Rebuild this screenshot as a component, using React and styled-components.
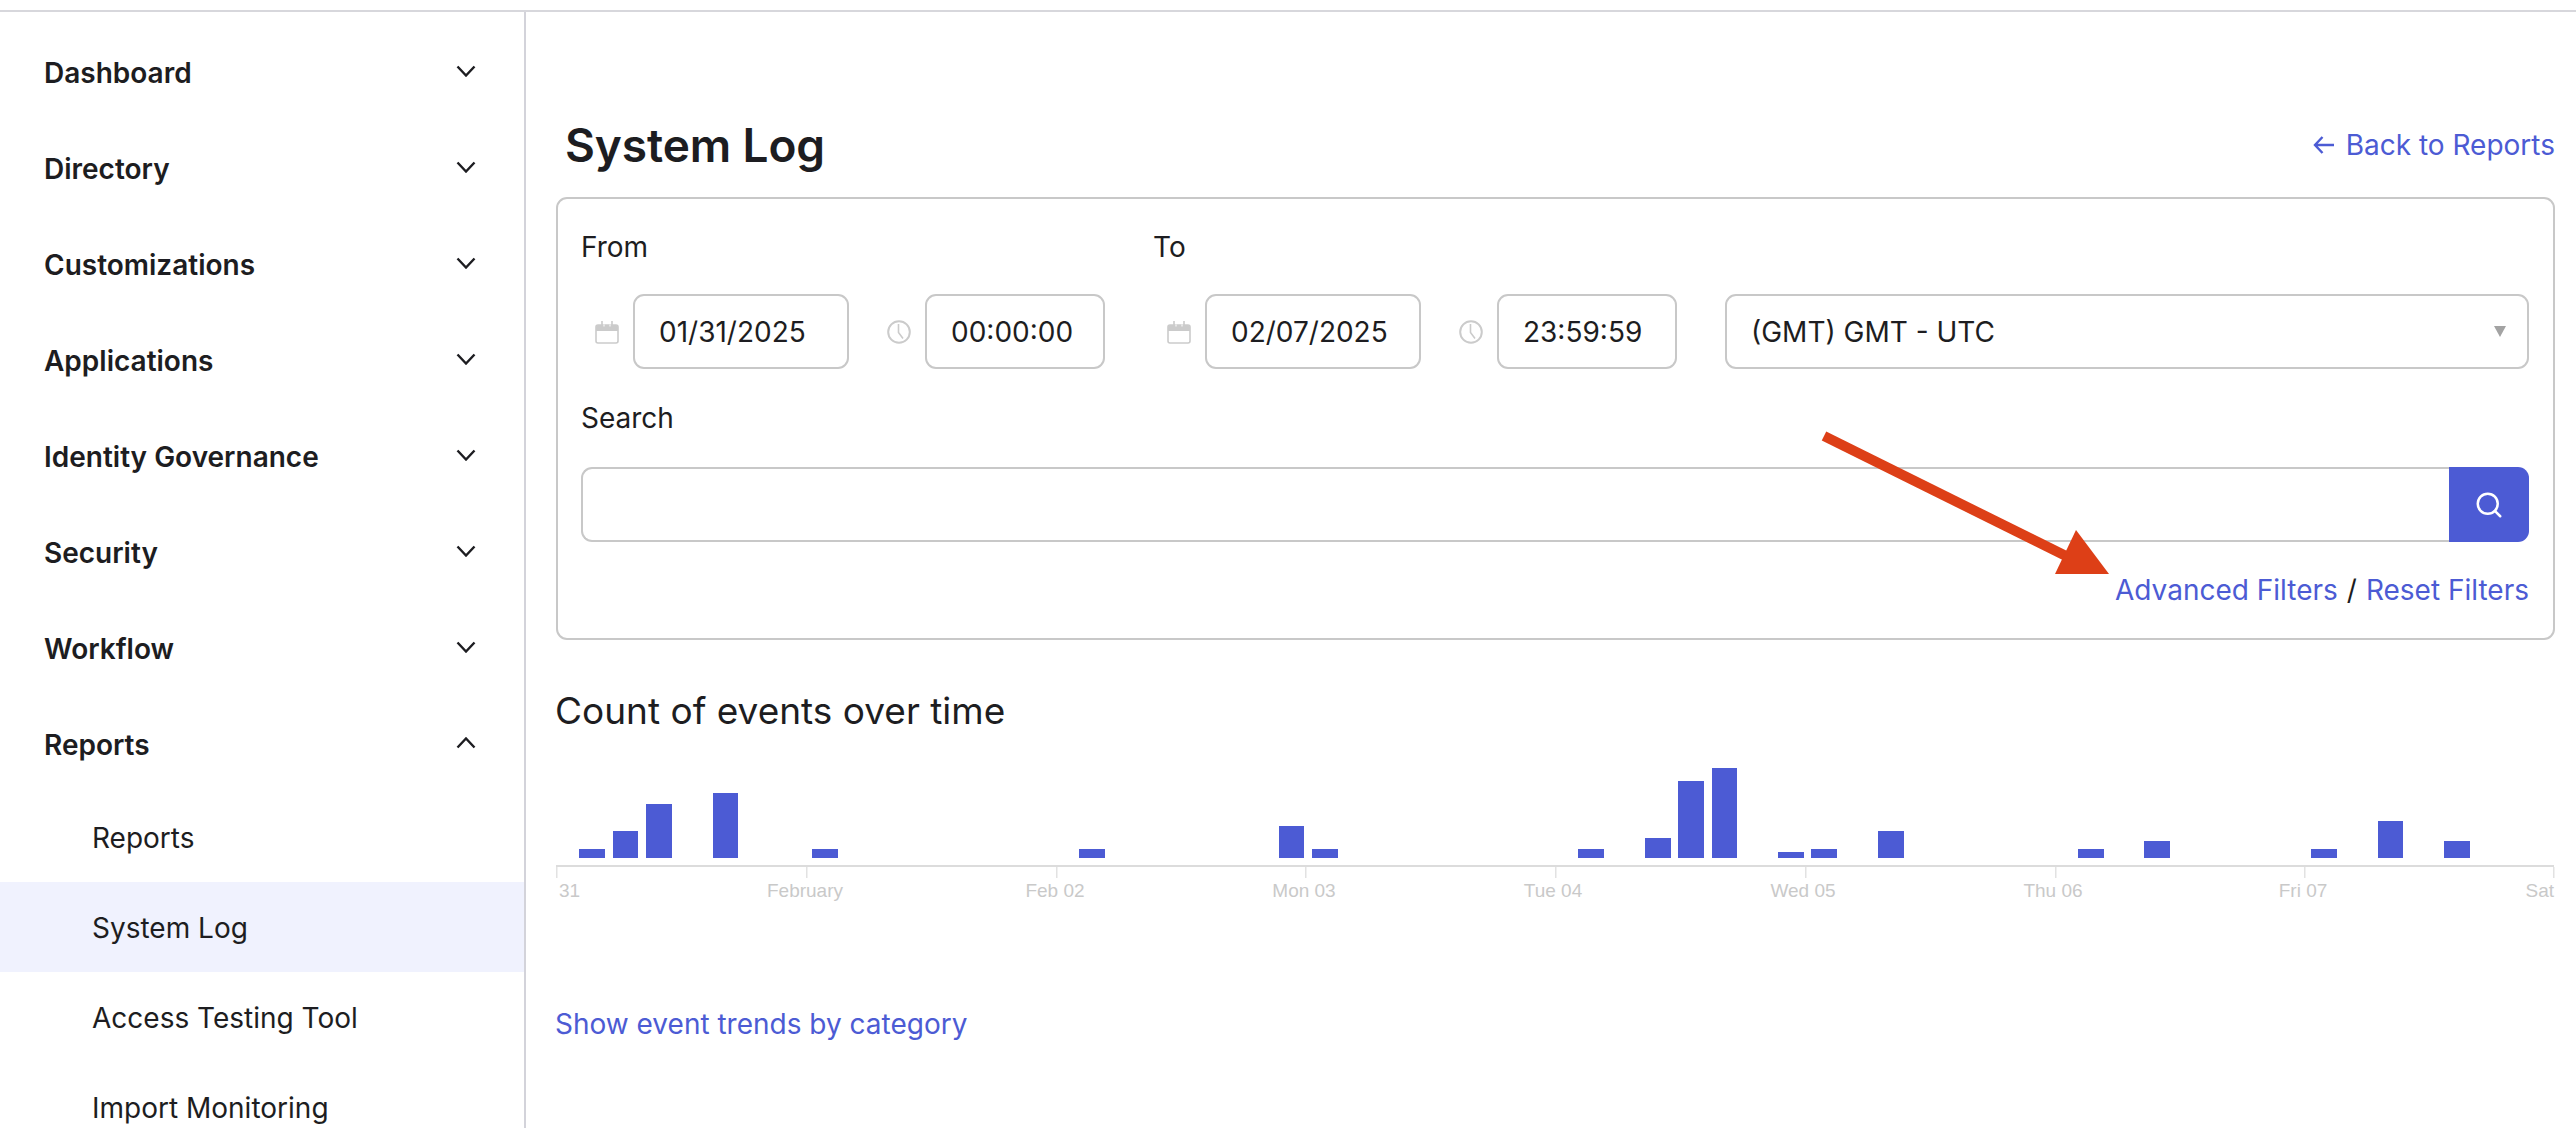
import React from "react";
import styled, { createGlobalStyle } from "styled-components";
import { Search } from "lucide-react";

const Global = createGlobalStyle`
  html, body { margin: 0; padding: 0; background: #fff; }
  body { font-family: Inter, "Liberation Sans", sans-serif; color: #1d1d21; overflow: hidden; }
`;

const Page = styled.div`
  width: 2576px;
  height: 1128px;
  display: flex;
  flex-direction: column;
  overflow: hidden;
  padding-top: 10px;
  box-sizing: border-box;
`;
const Body = styled.div`
  flex: 1;
  display: flex;
  min-height: 0;
  border-top: 2px solid #d7d7dc;
`;
const Sidebar = styled.nav`
  width: 526px;
  box-sizing: border-box;
  flex: none;
  padding-top: 12px;
  border-right: 2px solid #d3d3da;
`;
const SectionRow = styled.div`
  height: 96px;
  box-sizing: border-box;
  padding: 2px 48px 0 44px;
  display: flex;
  align-items: center;
  justify-content: space-between;
  font-size: 28px;
  font-weight: 600;
`;
const Chevron = styled.svg`
  width: 20px;
  height: 12px;
  margin-top: -4px;
  transform: ${(p) => (p.$open ? "rotate(180deg)" : "none")};
`;
const SubList = styled.div`
  display: flex;
  flex-direction: column;
`;
const SubItem = styled.div`
  height: 90px;
  box-sizing: border-box;
  padding: 2px 0 0 92px;
  display: flex;
  align-items: center;
  font-size: 28px;
  background: ${(p) => (p.$active ? "#f0f2fe" : "transparent")};
`;
const Main = styled.main`
  flex: 1;
  min-width: 0;
  padding: 98px 21px 0 30px;
`;
const Header = styled.header`
  height: 70px;
  margin-bottom: 17px;
  display: flex;
  align-items: center;
  justify-content: space-between;
`;
const Title = styled.h1`
  margin: 0 0 0 9px;
  font-size: 46px;
  font-weight: 600;
  letter-spacing: -0.1px;
`;
const Link = styled.a`
  color: #4c5bd4;
  font-size: 28px;
  line-height: 32px;
  text-decoration: none;
`;
const BackLink = styled(Link)`
  display: flex;
  align-items: center;
  gap: 11px;
`;
const Panel = styled.section`
  position: relative;
  box-sizing: border-box;
  height: 443px;
  padding: 32px 24px 0 23px;
  border: 2px solid #c8c8c8;
  border-radius: 11px;
`;
const FieldsRow = styled.div`
  display: flex;
  gap: 48px;
`;
const FieldColumn = styled.div`
  width: 524px;
  flex: none;
`;
const Label = styled.div`
  font-size: 28px;
  line-height: 32px;
`;
const Inputs = styled.div`
  margin-top: 31px;
  padding-left: 14px;
  display: flex;
  align-items: center;
`;
const Box = styled.div`
  box-sizing: border-box;
  height: 75px;
  width: ${(p) => p.$w}px;
  margin-left: 14px;
  margin-right: ${(p) => p.$mr || 0}px;
  padding-left: 24px;
  display: flex;
  align-items: center;
  font-size: 28px;
  border: 2px solid #c8c8c8;
  border-radius: 11px;
`;
const SelectBox = styled.div`
  flex: 1;
  align-self: flex-end;
  box-sizing: border-box;
  height: 75px;
  padding: 0 21px 0 24px;
  display: flex;
  align-items: center;
  justify-content: space-between;
  font-size: 28px;
  border: 2px solid #c8c8c8;
  border-radius: 11px;
`;
const Caret = styled.span`
  width: 0;
  height: 0;
  border-left: 6px solid transparent;
  border-right: 6px solid transparent;
  border-top: 11px solid #a3a3a3;
`;
const SearchLabel = styled(Label)`
  margin-top: 33px;
`;
const SearchRow = styled.div`
  margin-top: 33px;
  display: flex;
  height: 75px;
`;
const SearchField = styled.div`
  flex: 1;
  box-sizing: border-box;
  border: 2px solid #c8c8c8;
  border-right: none;
  border-radius: 11px 0 0 11px;
`;
const SearchButton = styled.div`
  width: 80px;
  display: flex;
  align-items: center;
  justify-content: center;
  background: #4c5bd4;
  color: #fff;
  border-radius: 0 11px 11px 0;
`;
const FilterLinks = styled.div`
  margin-top: 32px;
  display: flex;
  justify-content: flex-end;
  gap: 9px;
  font-size: 28px;
  line-height: 32px;
`;
const RedArrow = styled.svg`
  position: absolute;
  left: 1262px;
  top: 231px;
`;
const ChartTitle = styled.h2`
  margin: 49px 0 0 -1px;
  font-size: 37px;
  line-height: 44px;
  font-weight: 400;
`;
const ChartSvg = styled.svg`
  display: block;
  margin-left: -1px;
`;
const TrendLink = styled(Link)`
  display: block;
  margin: 103px 0 0 -1px;
`;

const sections = ["Dashboard", "Directory", "Customizations", "Applications", "Identity Governance", "Security", "Workflow"];

const bars = [
  [579, 605, 849], [613, 638, 831], [646, 672, 804], [713, 738, 793], [812, 838, 849],
  [1079, 1105, 849], [1279, 1304, 826], [1312, 1338, 849], [1578, 1604, 849], [1645, 1671, 838],
  [1678, 1704, 781], [1712, 1737, 768], [1778, 1804, 852], [1811, 1837, 849], [1878, 1904, 831],
  [2078, 2104, 849], [2144, 2170, 841], [2311, 2337, 849], [2378, 2403, 821], [2444, 2470, 841],
];
const ticks = [
  [556, "31", "start", 559], [806, "February", "middle", 805], [1056, "Feb 02", "middle", 1055],
  [1305, "Mon 03", "middle", 1304], [1555, "Tue 04", "middle", 1553], [1805, "Wed 05", "middle", 1803],
  [2055, "Thu 06", "middle", 2053], [2304, "Fri 07", "middle", 2303], [2553, "Sat", "end", 2554],
];
const OX = 555;
const OY = 733;

const ChevronIcon = ({ open }) => (
  <Chevron $open={open} viewBox="0 0 20 12">
    <path d="M1.5 1.5 L10 10.5 L18.5 1.5" fill="none" stroke="#1d1d21" strokeWidth="2.4" />
  </Chevron>
);

const CalendarIcon = () => (
  <svg width="24" height="24" viewBox="0 0 24 24">
    <rect x="1" y="5" width="22" height="18" rx="2" fill="#fff" stroke="#cbcbcb" strokeWidth="1.6" />
    <path d="M1 7a2 2 0 0 1 2-2h18a2 2 0 0 1 2 2v4H1z" fill="#cbcbcb" />
    <path d="M7 1v6M17 1v6" stroke="#cbcbcb" strokeWidth="1.6" />
    <path d="M9 4.5v2M15 4.5v2" stroke="#fff" strokeWidth="1" />
  </svg>
);

const ClockIcon = () => (
  <svg width="24" height="24" viewBox="0 0 24 24">
    <circle cx="12" cy="12" r="10.8" fill="none" stroke="#cbcbcb" strokeWidth="2" />
    <path d="M11.5 4v8.5l4.5 6" fill="none" stroke="#cbcbcb" strokeWidth="1.6" />
  </svg>
);

const DateTime = ({ label, date, time }) => (
  <FieldColumn>
    <Label>{label}</Label>
    <Inputs>
      <CalendarIcon />
      <Box $w={216} $mr={38}>{date}</Box>
      <ClockIcon />
      <Box $w={180}>{time}</Box>
    </Inputs>
  </FieldColumn>
);

const Chart = () => (
  <ChartSvg width="2004" height="172" viewBox="0 0 2004 172">
    {bars.map(([a, b, top]) => (
      <rect key={a} x={a - OX} y={top - OY} width={b - a} height={858 - top} fill="#4c5bd4" />
    ))}
    <rect x="1" y={865 - OY} width="1998" height="2" fill="#dcdcdc" />
    {ticks.map(([x, text, anchor, tx]) => (
      <g key={text}>
        <rect x={x - OX} y={867 - OY} width="1.5" height="11" fill="#e2e2e2" />
        <text x={tx - OX} y={897 - OY} textAnchor={anchor} fontFamily="'Liberation Sans', sans-serif" fontSize="19" fill="#c9c9c9">
          {text}
        </text>
      </g>
    ))}
  </ChartSvg>
);

export default function App() {
  return (
    <Page>
      <Global />
      <Body>
        <Sidebar>
          {sections.map((s) => (
            <SectionRow key={s}>
              {s}
              <ChevronIcon />
            </SectionRow>
          ))}
          <SectionRow>
            Reports
            <ChevronIcon open />
          </SectionRow>
          <SubList>
            <SubItem>Reports</SubItem>
            <SubItem $active>System Log</SubItem>
            <SubItem>Access Testing Tool</SubItem>
            <SubItem>Import Monitoring</SubItem>
          </SubList>
        </Sidebar>
        <Main>
          <Header>
            <Title>System Log</Title>
            <BackLink>
              <svg width="22" height="20" viewBox="0 0 22 20">
                <path d="M21 10H2M9.5 2L2 10l7.5 8" fill="none" stroke="#4c5bd4" strokeWidth="2.4" />
              </svg>
              Back to Reports
            </BackLink>
          </Header>
          <Panel>
            <FieldsRow>
              <DateTime label="From" date="01/31/2025" time="00:00:00" />
              <DateTime label="To" date="02/07/2025" time="23:59:59" />
              <SelectBox>
                (GMT) GMT - UTC
                <Caret />
              </SelectBox>
            </FieldsRow>
            <SearchLabel>Search</SearchLabel>
            <SearchRow>
              <SearchField />
              <SearchButton>
                <Search size={30} strokeWidth={2} />
              </SearchButton>
            </SearchRow>
            <FilterLinks>
              <Link>Advanced Filters</Link>
              <span>/</span>
              <Link>Reset Filters</Link>
            </FilterLinks>
            <RedArrow width="292" height="148" viewBox="0 0 292 148">
              <line x1="4" y1="6" x2="250" y2="128" stroke="#dd3f17" strokeWidth="10" />
              <polygon points="256,100 235,144 289,144" fill="#dd3f17" />
            </RedArrow>
          </Panel>
          <ChartTitle>Count of events over time</ChartTitle>
          <Chart />
          <TrendLink>Show event trends by category</TrendLink>
        </Main>
      </Body>
    </Page>
  );
}
